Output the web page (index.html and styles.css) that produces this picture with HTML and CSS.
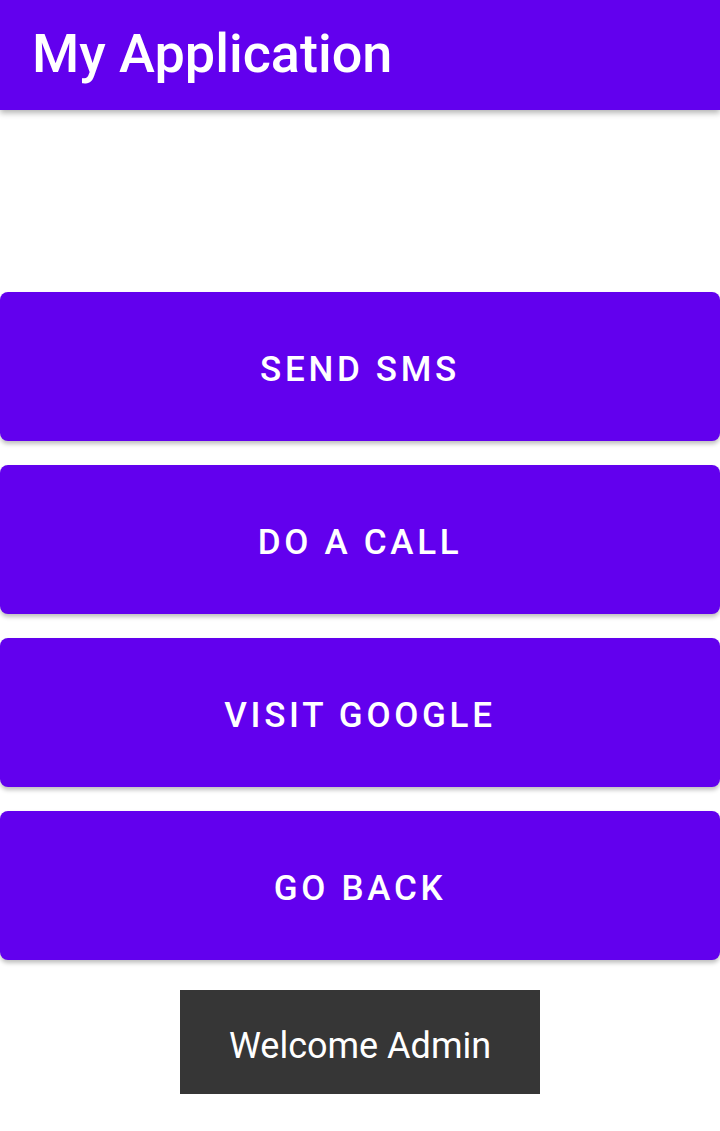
FILE: index.html
```html
<!DOCTYPE html>
<html>
<head>
<meta charset="utf-8">
<link rel="stylesheet" href="styles.css">
</head>
<body>
<header class="appbar"><h1 class="title">My Application</h1></header>
<main class="content">
  <button class="btn">SEND SMS</button>
  <button class="btn">DO A CALL</button>
  <button class="btn">VISIT GOOGLE</button>
  <button class="btn">GO BACK</button>
  <div class="toast">Welcome Admin</div>
</main>
</body>
</html>
```
FILE: styles.css
```css
html, body {
  margin: 0;
  padding: 0;
  background: #ffffff;
  font-family: Roboto, "Noto Sans", sans-serif;
}
.appbar {
  height: 110px;
  background: #6200ee;
  display: flex;
  align-items: center;
  padding-left: 32px;
  box-shadow: 0 3px 6px rgba(0,0,0,0.3);
  position: relative;
  z-index: 2;
}
.title {
  margin: 0;
  color: #ffffff;
  font-size: 54px;
  font-weight: 500;
  line-height: 1;
  margin-top: -2px;
}
.content {
  display: flex;
  flex-direction: column;
  align-items: center;
  padding-top: 182px;
  gap: 24px;
}
.btn {
  width: 720px;
  height: 149px;
  border: none;
  border-radius: 8px;
  background: #6200ee;
  color: #ffffff;
  font-family: Roboto, "Noto Sans", sans-serif;
  font-size: 35px;
  font-weight: 500;
  letter-spacing: 3.7px;
  box-shadow: 0 3px 4px rgba(0,0,0,0.25);
  padding: 0;
  padding-top: 6px;
}
.toast {
  margin-top: 6px;
  width: 360px;
  height: 104px;
  background: #363636;
  color: #ffffff;
  font-size: 36px;
  display: flex;
  align-items: center;
  justify-content: center;
  box-sizing: border-box;
  padding-top: 7px;
}
```
